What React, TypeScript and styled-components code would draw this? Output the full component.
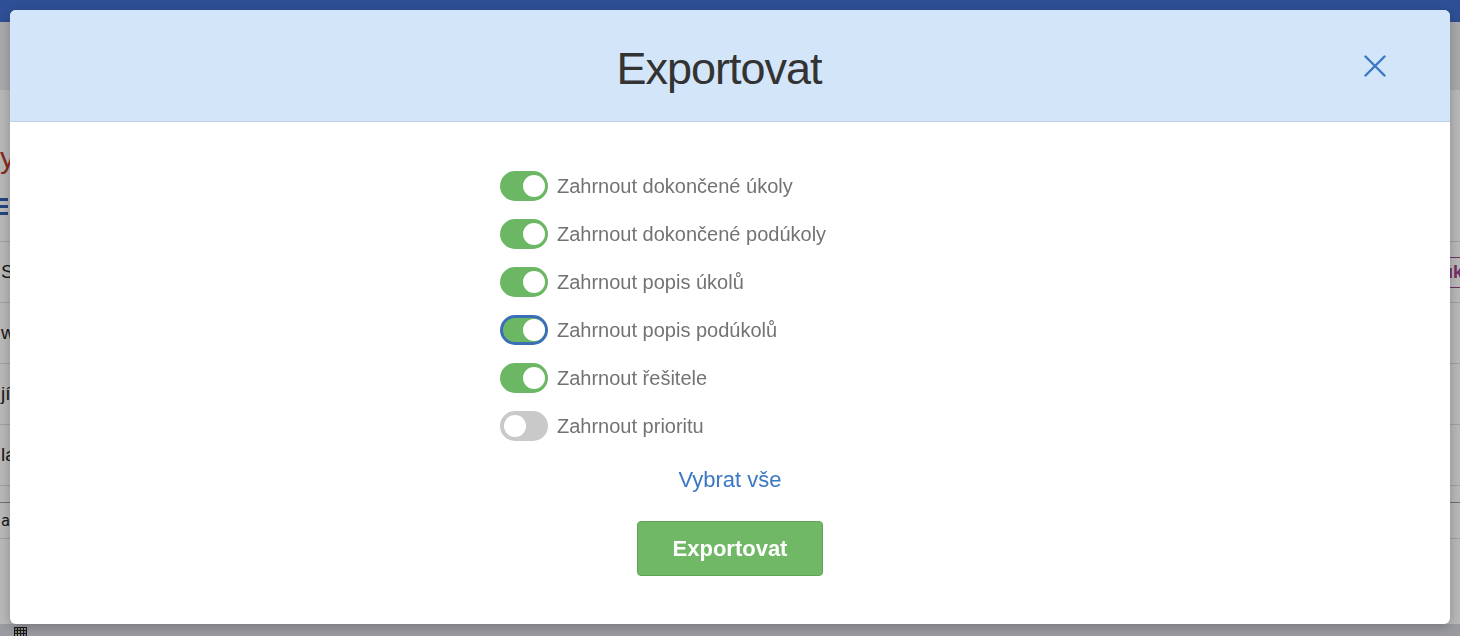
import styled, { createGlobalStyle } from "styled-components";
import { useState } from "react";

const GlobalStyle = createGlobalStyle`
  html, body {
    margin: 0;
    padding: 0;
    height: 100%;
    overflow: hidden;
  }
  body {
    font-family: "Liberation Sans", Arial, sans-serif;
  }
`;

// page behind the modal
const Page = styled.div`
  height: 100vh;
  display: flex;
  flex-direction: column;
  background: #fff;
  overflow: hidden;
`;

const NavBar = styled.div`
  height: 22px;
  background: #406ed0;
  flex-shrink: 0;
`;

const SubBar = styled.div`
  height: 68px;
  background: #ebebf0;
  flex-shrink: 0;
`;

const Content = styled.div`
  flex: 1;
  display: flex;
  flex-direction: column;
`;

const PageTitle = styled.h1`
  margin: 50px 0 0 -60px;
  font-size: 30px;
  font-weight: 400;
  color: #c0392b;
  line-height: 36px;
`;

const MenuIcon = styled.div`
  margin: 22px 0 0 -6px;
  width: 14px;
  height: 17px;
  display: flex;
  flex-direction: column;
  justify-content: space-between;

  span {
    height: 3px;
    background: #2f5fb0;
  }
`;

const Table = styled.div`
  margin-top: 26px;
  display: flex;
  flex-direction: column;
`;

interface RowProps {
  $small?: boolean;
  $dark?: boolean;
}

const Row = styled.div<RowProps>`
  height: ${(p) => (p.$small ? "35px" : "60px")};
  border-top: 1px solid ${(p) => (p.$dark ? "#999" : "#dedede")};
  display: flex;
  align-items: center;
  justify-content: space-between;
  font-size: ${(p) => (p.$small ? "15px" : "19px")};
  font-family: ${(p) =>
    p.$small ? '"DejaVu Sans Mono", monospace' : '"Liberation Sans", Arial, sans-serif'};
  color: #222;
  padding-left: 1px;
  white-space: nowrap;
`;

const Spacer = styled.div`
  height: 16px;
  border-top: 1px solid #dedede;
`;

const OutlineButton = styled.span`
  margin-right: -30px;
  padding: 4px 10px;
  border: 1px solid #a0408a;
  border-radius: 3px;
  color: #a0408a;
  font-size: 18px;
  font-weight: 700;
`;

const Footer = styled.div`
  height: 12px;
  background: #d6d7de;
  flex-shrink: 0;
  display: flex;
  align-items: flex-end;
  padding-left: 14px;
`;

const Overlay = styled.div`
  position: fixed;
  inset: 0;
  background: rgba(0, 0, 0, 0.28);
  display: flex;
  padding: 10px;
  box-sizing: border-box;
`;

const Modal = styled.div`
  flex: 0 0 1440px;
  height: 614px;
  background: #fff;
  border-radius: 6px;
  box-shadow: 0 3px 12px rgba(0, 0, 0, 0.25);
  display: flex;
  flex-direction: column;
  overflow: hidden;
`;

const Header = styled.div`
  height: 111px;
  background: #d3e5f8;
  border-bottom: 1px solid #bfd0e2;
  display: flex;
  align-items: center;
  padding: 0 64px;
`;

const Title = styled.h2`
  flex: 1;
  margin: 6px 0 0;
  text-align: center;
  font-size: 45px;
  letter-spacing: -1px;
  font-weight: 400;
  color: #333;
`;

const CloseButton = styled.button`
  width: 22px;
  height: 22px;
  padding: 0;
  border: none;
  background: none;
  color: #3a78c3;
  cursor: pointer;
  display: flex;

  svg {
    width: 100%;
    height: 100%;
  }
`;

const Body = styled.div`
  padding-top: 40px;
  display: flex;
  flex-direction: column;
  align-items: center;
`;

const OptionList = styled.div`
  width: 460px;
  display: flex;
  flex-direction: column;
`;

const OptionRow = styled.label`
  height: 48px;
  display: flex;
  align-items: center;
  gap: 9px;
  font-size: 20px;
  color: #737373;
  cursor: pointer;
`;

interface SwitchProps {
  $on: boolean;
  $focused?: boolean;
}

const Switch = styled.span<SwitchProps>`
  position: relative;
  width: 48px;
  height: 30px;
  box-sizing: border-box;
  border-radius: 15px;
  background: ${(p) => (p.$on ? "#6cb764" : "#c9c9c9")};
  border: 3px solid ${(p) => (p.$focused ? "#3a6fb8" : p.$on ? "#6cb764" : "#c9c9c9")};
  flex-shrink: 0;

  &::after {
    content: "";
    position: absolute;
    top: 1px;
    left: ${(p) => (p.$on ? "20px" : "1px")};
    width: 22px;
    height: 22px;
    border-radius: 50%;
    background: #fff;
  }
`;

const SelectAll = styled.a`
  margin-top: 15px;
  line-height: 30px;
  font-size: 22px;
  color: #3a78c3;
  text-decoration: none;
  cursor: pointer;
`;

const ExportButton = styled.button`
  margin-top: 26px;
  width: 186px;
  height: 55px;
  background: #70b866;
  border: 1px solid #5fa456;
  border-radius: 4px;
  color: #fff;
  font-family: "Liberation Sans", Arial, sans-serif;
  font-size: 22px;
  font-weight: 700;
  cursor: pointer;
`;

const options = [
  { label: "Zahrnout dokončené úkoly", on: true },
  { label: "Zahrnout dokončené podúkoly", on: true },
  { label: "Zahrnout popis úkolů", on: true },
  { label: "Zahrnout popis podúkolů", on: true },
  { label: "Zahrnout řešitele", on: true },
  { label: "Zahrnout prioritu", on: false },
];

const AppIcon = () => (
  <svg width="13" height="9" viewBox="0 0 13 9">
    <rect width="13" height="9" fill="#222" />
    {[0, 1, 2].map((r) =>
      [0, 1, 2, 3].map((c) => (
        <rect
          key={`${r}-${c}`}
          x={1 + c * 3}
          y={1 + r * 3}
          width="2"
          height="2"
          fill={["#9ad", "#d9a", "#ad9", "#ccc"][(r + c) % 4]}
        />
      ))
    )}
  </svg>
);

const App = () => {
  const [values, setValues] = useState(options.map((o) => o.on));

  const toggle = (i: number) =>
    setValues((prev) => prev.map((v, j) => (j === i ? !v : v)));

  return (
    <>
      <GlobalStyle />
      <Page>
        <NavBar />
        <SubBar />
        <Content>
          <PageTitle>Úkoly</PageTitle>
          <MenuIcon>
            <span />
            <span />
            <span />
          </MenuIcon>
          <Table>
            <Row>
              Stav
              <OutlineButton>Nový úkol</OutlineButton>
            </Row>
            <Row>wiki</Row>
            <Row>jíst</Row>
            <Row>la</Row>
            <Spacer />
            <Row $small $dark>
              at
            </Row>
            <Row />
          </Table>
        </Content>
        <Footer>
          <AppIcon />
        </Footer>
      </Page>

      <Overlay>
        <Modal>
          <Header>
            <Title>Exportovat</Title>
            <CloseButton aria-label="Zavřít">
              <svg viewBox="0 0 22 22" fill="none" stroke="currentColor" strokeWidth="2.4" strokeLinecap="round">
                <path d="M1.5 1.5 L20.5 20.5 M20.5 1.5 L1.5 20.5" />
              </svg>
            </CloseButton>
          </Header>
          <Body>
            <OptionList>
              {options.map((o, i) => (
                <OptionRow key={o.label} onClick={() => toggle(i)}>
                  <Switch $on={values[i]} $focused={i === 3} />
                  {o.label}
                </OptionRow>
              ))}
            </OptionList>
            <SelectAll onClick={() => setValues(options.map(() => true))}>
              Vybrat vše
            </SelectAll>
            <ExportButton>Exportovat</ExportButton>
          </Body>
        </Modal>
      </Overlay>
    </>
  );
};

export default App;
